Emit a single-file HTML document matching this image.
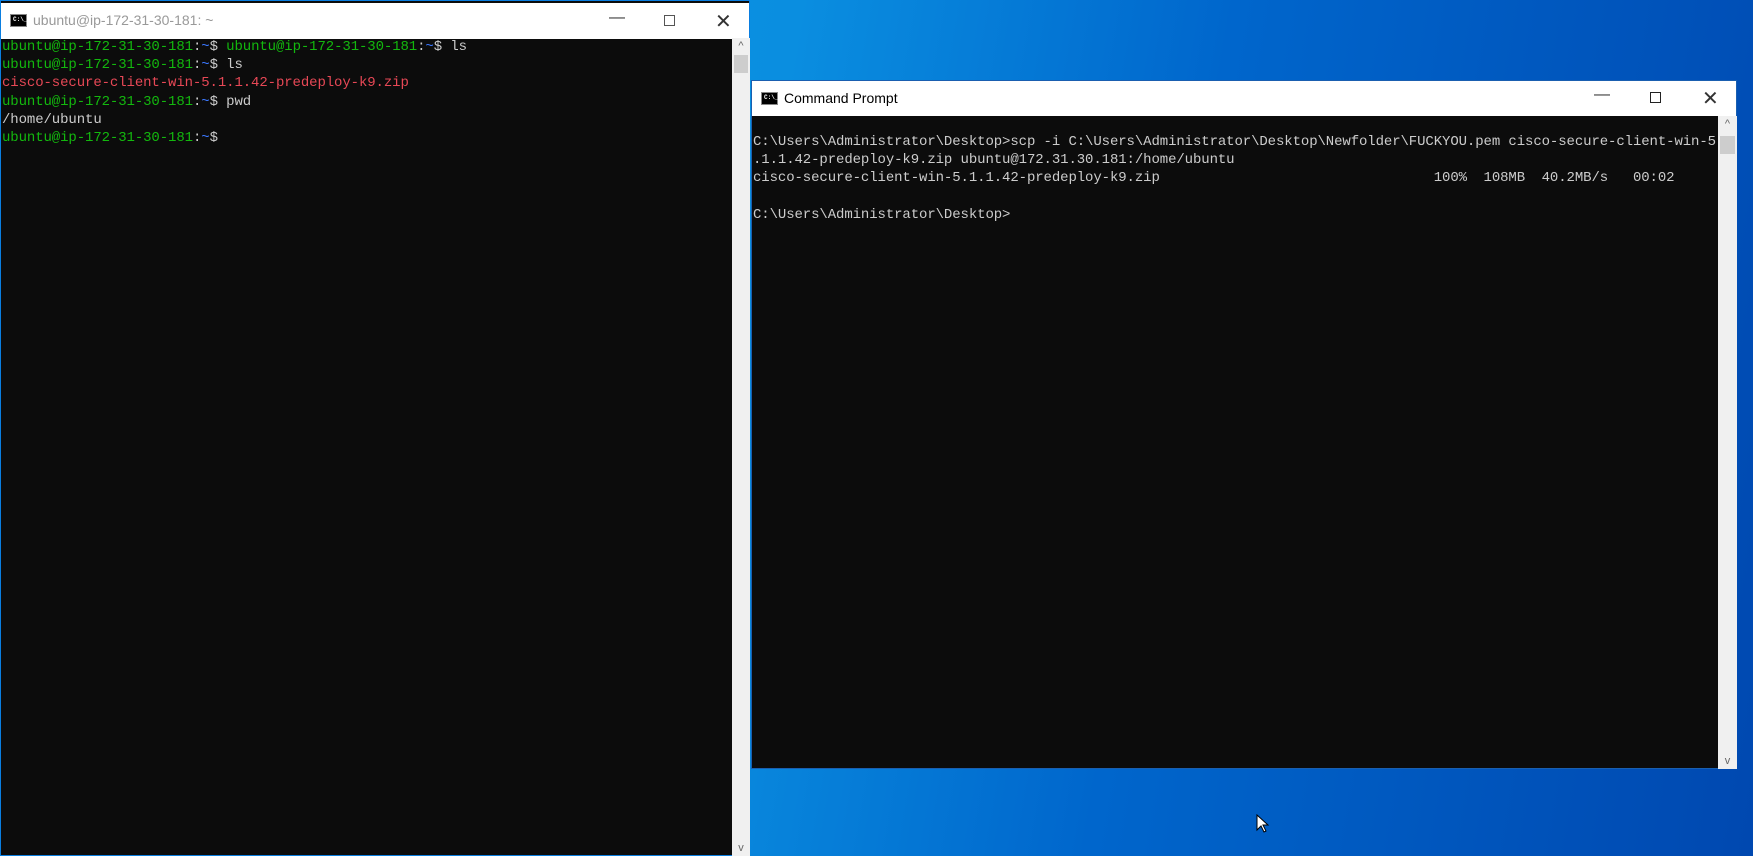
<!DOCTYPE html>
<html><head><meta charset="utf-8"><style>
*{margin:0;padding:0;box-sizing:border-box}
body{width:1753px;height:856px;overflow:hidden;position:relative;background:linear-gradient(100deg,#0aa0ec 0%,#0a8ee0 42%,#0066cc 65%,#0048b0 100%);font-family:"Liberation Sans",sans-serif}
.win{position:absolute;background:#0c0c0c;border:1px solid #3a7bd0}
.tb{position:absolute;left:0;right:0;top:0;background:#fff;}
.tt{position:absolute;font-size:14px;}
.ico{position:absolute;width:17px;height:13px;background:#000;border:1px solid #888}
.ico:after{content:"C:\\_";position:absolute;left:2px;top:1px;font:bold 6px "Liberation Mono",monospace;color:#fff}
.ctl{position:absolute;color:#333;font-size:16px}
.term{position:absolute;font-family:"Liberation Mono",monospace;font-size:14px;line-height:18.2px;color:#cccccc;white-space:pre;letter-spacing:-0.1px}
.g{color:#13b80e}.b{color:#3b78ff}.r{color:#e74856}
.sb{position:absolute;background:#f0f0f0}
.th{position:absolute;background:#cdcdcd;left:2px;right:2px}
.ar{position:absolute;left:0;right:0;text-align:center;color:#666;font-size:11px}
</style></head><body>
<div class="win" style="left:0;top:0;width:750px;height:856px;border-color:#0a7ee0">
 <div class="tb" style="height:36px;top:2px">
  <div class="ico" style="left:9px;top:11px"></div>
  <div class="tt" style="left:32px;top:9px;color:#999">ubuntu@ip-172-31-30-181: ~</div>
  <div class="ctl" style="left:608px;top:6px">—</div>
  <div style="position:absolute;left:663px;top:12px;width:11px;height:11px;border:1px solid #555"></div>
  <div class="ctl" style="left:714px;top:6px;font-size:20px">✕</div>
 </div>
 <div class="term" style="left:1px;top:37px"><span class="g">ubuntu@ip-172-31-30-181</span>:<span class="b">~</span>$ <span class="g">ubuntu@ip-172-31-30-181</span>:<span class="b">~</span>$ ls
<span class="g">ubuntu@ip-172-31-30-181</span>:<span class="b">~</span>$ ls
<span class="r">cisco-secure-client-win-5.1.1.42-predeploy-k9.zip</span>
<span class="g">ubuntu@ip-172-31-30-181</span>:<span class="b">~</span>$ pwd
/home/ubuntu
<span class="g">ubuntu@ip-172-31-30-181</span>:<span class="b">~</span>$</div>
 <div class="sb" style="left:731px;top:37px;width:18px;height:818px">
  <div class="ar" style="top:2px">^</div>
  <div class="th" style="top:17px;height:18px"></div>
  <div class="ar" style="bottom:2px">v</div>
 </div>
</div>
<div class="win" style="left:751px;top:80px;width:986px;height:689px;border-color:#1a5fb0">
 <div class="tb" style="height:35px">
  <div class="ico" style="left:9px;top:11px"></div>
  <div class="tt" style="left:32px;top:9px;color:#000">Command Prompt</div>
  <div class="ctl" style="left:842px;top:5px">—</div>
  <div style="position:absolute;left:898px;top:11px;width:11px;height:11px;border:1px solid #222"></div>
  <div class="ctl" style="left:950px;top:5px;font-size:20px">✕</div>
 </div>
 <div class="term" style="left:1px;top:52px">C:\Users\Administrator\Desktop>scp -i C:\Users\Administrator\Desktop\Newfolder\FUCKYOU.pem cisco-secure-client-win-5
.1.1.42-predeploy-k9.zip ubuntu@172.31.30.181:/home/ubuntu
cisco-secure-client-win-5.1.1.42-predeploy-k9.zip                                 100%  108MB  40.2MB/s   00:02

C:\Users\Administrator\Desktop></div>
 <div class="sb" style="left:966px;top:35px;width:19px;height:653px">
  <div class="ar" style="top:2px">^</div>
  <div class="th" style="top:20px;height:18px"></div>
  <div class="ar" style="bottom:2px">v</div>
 </div>
</div>
<svg style="position:absolute;left:1256px;top:814px" width="14" height="20" viewBox="0 0 14 20"><path d="M1 1 L1 16 L5 12 L8 18 L10 17 L7 11 L12 11 Z" fill="#fff" stroke="#000" stroke-width="1"/></svg>
</body></html>
